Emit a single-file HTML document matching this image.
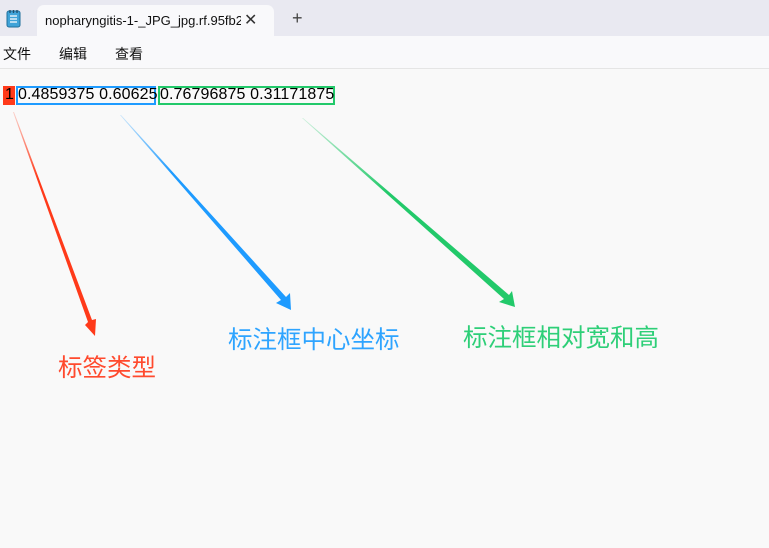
<!DOCTYPE html>
<html><head><meta charset="utf-8"><style>
body{margin:0;width:769px;height:548px;overflow:hidden;background:#f9f9f9;font-family:"Liberation Sans","Noto Sans CJK SC",sans-serif;position:relative}
.tabbar{position:absolute;left:0;top:0;width:769px;height:36px;background:#e9e9f1}
.tab{position:absolute;left:37px;top:5px;width:237px;height:31px;background:#f9f9fb;border-radius:7px 7px 0 0}
.menu{position:absolute;left:0;top:36px;width:769px;height:32px;background:#f9f9fb;border-bottom:1px solid #e5e5e5;font-size:14px;color:#111}
.menu span{position:absolute;top:8px}
.t{position:absolute;top:86px;font-size:16px;color:#000;white-space:nowrap;line-height:18px}
.b{position:absolute;top:86px;height:15px;border:2px solid}
.lab{position:absolute;font-size:24.5px;white-space:nowrap}
</style></head><body>
<div class="tabbar">
<svg style="position:absolute;left:6px;top:9px" width="16" height="19" viewBox="0 0 16 19"><rect x="1" y="2" width="13" height="16" rx="2" fill="#3fa3d8" stroke="#1f6f9c"/><path d="M4 7h7M4 10h7M4 13h7" stroke="#fff" stroke-width="1.2"/><path d="M4 1v3M7.5 1v3M11 1v3" stroke="#1f4f6c" stroke-width="1.3"/></svg>
<div class="tab"><span style="position:absolute;left:8px;top:8px;font-size:13px;color:#111;width:196px;overflow:hidden;white-space:nowrap">nopharyngitis-1-_JPG_jpg.rf.95fb2b</span><span style="position:absolute;left:207px;top:5px;font-size:16px;color:#333">✕</span></div>
<span style="position:absolute;left:292px;top:8px;font-size:18px;color:#444">+</span>
</div>
<div class="menu"><span style="left:3px">文件</span><span style="left:59px">编辑</span><span style="left:115px">查看</span></div>
<div class="b" style="left:3px;width:8px;border-color:#ff3a1a;background:#ff3a1a"></div>
<div class="b" style="left:16px;width:136px;border-color:#1e9bff"></div>
<div class="b" style="left:158px;width:173px;border-color:#22c96a"></div>
<div class="t" style="left:5px">1</div>
<div class="t" style="left:18px;letter-spacing:0.1px">0.4859375 0.60625</div>
<div class="t" style="left:160px;letter-spacing:0.1px">0.76796875 0.31171875</div>
<svg style="position:absolute;left:0;top:0" width="769" height="548">
<defs>
<linearGradient id="gr" x1="13" y1="112" x2="94" y2="336" gradientUnits="userSpaceOnUse"><stop offset="0" stop-color="#ff3a1a" stop-opacity=".2"/><stop offset=".3" stop-color="#ff3a1a"/></linearGradient>
<linearGradient id="gb" x1="120" y1="115" x2="290" y2="310" gradientUnits="userSpaceOnUse"><stop offset="0" stop-color="#1e9bff" stop-opacity=".2"/><stop offset=".3" stop-color="#1e9bff"/></linearGradient>
<linearGradient id="gg" x1="302" y1="118" x2="514" y2="307" gradientUnits="userSpaceOnUse"><stop offset="0" stop-color="#22c96a" stop-opacity=".2"/><stop offset=".4" stop-color="#22c96a"/></linearGradient>
</defs>
<polygon points="13,112 14,112 92,320 96,319 95,336 85,325 88,322" fill="url(#gr)"/>
<polygon points="120,115 121,115 286,297 290,293 291,310 276,303 281,300" fill="url(#gb)"/>
<polygon points="302,118 303,118 509,295 512,291 515,307 499,302 504,299" fill="url(#gg)"/>
</svg>
<div class="lab" style="left:58px;top:349px;color:#ff4a2e">标签类型</div>
<div class="lab" style="left:228px;top:321px;color:#2ea4ff">标注框中心坐标</div>
<div class="lab" style="left:463px;top:319px;color:#2ecf78">标注框相对宽和高</div>
</body></html>
